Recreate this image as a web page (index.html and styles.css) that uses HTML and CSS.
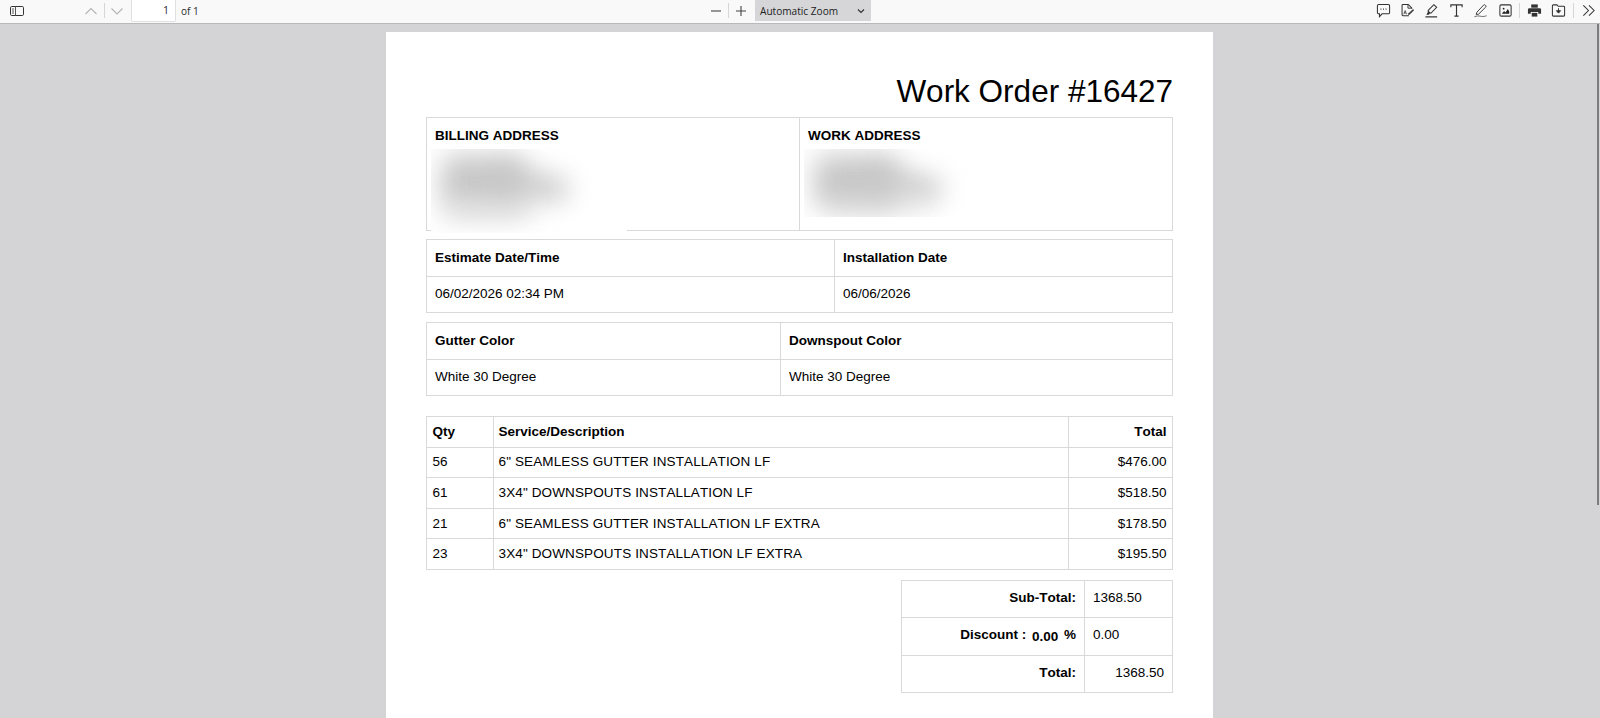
FILE: index.html
```html
<!DOCTYPE html>
<html lang="en">
<head>
<meta charset="utf-8">
<title>Work Order #16427</title>
<link rel="stylesheet" href="styles.css">
</head>
<body>
<header class="toolbar">
  <div class="tb-left">
    <button class="icon-btn sidebar-btn"><svg width="16" height="16" viewBox="0 0 16 16"><rect x="1.500" y="3.500" width="13" height="9" rx="1.200" fill="none" stroke="#333" stroke-width="1"/><path d="M6.500 3.500v9M3 6h2M3 8h2M3 10h2" stroke="#555" stroke-width="1" fill="none"/></svg></button>
    <button class="icon-btn nav-up"><svg width="14" height="14" viewBox="0 0 14 14"><path d="M1.500 10 7 4.500 12.500 10" fill="none" stroke="#b4b4b6" stroke-width="1.100"/></svg></button>
    <span class="sep"></span>
    <button class="icon-btn nav-down"><svg width="14" height="14" viewBox="0 0 14 14"><path d="M1.500 4.500 7 10l5.500-5.500" fill="none" stroke="#b4b4b6" stroke-width="1.100"/></svg></button>
    <div class="page-input">1</div>
    <span class="page-of">of 1</span>
  </div>
  <div class="tb-center">
    <button class="icon-btn zoom-btn"><svg width="12" height="12" viewBox="0 0 12 12"><path d="M1 6h10" stroke="#444" stroke-width="1.100"/></svg></button>
    <span class="sep"></span>
    <button class="icon-btn zoom-btn"><svg width="12" height="12" viewBox="0 0 12 12"><path d="M1 6h10M6 1v10" stroke="#444" stroke-width="1.100"/></svg></button>
    <div class="zoom-select"><span>Automatic Zoom</span><svg width="8" height="6" viewBox="0 0 8 6"><path d="M1 1.500 4 4.500 7 1.500" fill="none" stroke="#333" stroke-width="1.200"/></svg></div>
  </div>
  <div class="tb-right">
    <button class="tool"><svg viewBox="0 0 16 16"><path d="M2.800 1.500h10.400a1.300 1.300 0 0 1 1.300 1.300v7.400a1.300 1.300 0 0 1-1.300 1.300H6.500l-2.800 3v-3H2.800a1.300 1.300 0 0 1-1.300-1.300V2.800a1.300 1.300 0 0 1 1.300-1.300z" fill="none" stroke="#333" stroke-width="1.100"/><path d="M4.800 6.500h1M7.500 6.500h1M10.200 6.500h1" stroke="#333" stroke-width="1.200"/></svg></button>
    <button class="tool"><svg viewBox="0 0 16 16"><path d="M9.500 13.500H3.200a1 1 0 0 1-1-1V2.500a1 1 0 0 1 1-1h5.600l3.700 3.700v1" fill="none" stroke="#333" stroke-width="1.100"/><path d="M8.500 1.500v4h4" fill="none" stroke="#333" stroke-width="1"/><path d="M9 11l5-4.500 1 1.200-4.800 4.700-1.700.3z" fill="#444"/><path d="M4 12l1.500-4 1.500 4M4.600 10.600h1.800" fill="none" stroke="#333" stroke-width=".8"/></svg></button>
    <button class="tool"><svg viewBox="0 0 16 16"><path d="M1.500 14.800h12.500" stroke="#333" stroke-width="1.300"/><path d="M4.500 7.800 10.500 1.800l3 2.800-6 6.200-3 .3z" fill="none" stroke="#333" stroke-width="1.100"/><path d="M4.500 8l2.800 2.600-3 .4z" fill="#333"/><path d="M3.700 10.500l-1.200 2h2.700l.8-1z" fill="#333"/></svg></button>
    <button class="tool"><svg viewBox="0 0 16 16"><path d="M2 4.500V2h12v2.500M8 2v12M5.800 14h4.400" fill="none" stroke="#333" stroke-width="1.200"/></svg></button>
    <button class="tool"><svg viewBox="0 0 16 16"><path d="M4 10 11.300 2.200a1.200 1.200 0 0 1 1.700 0l.5.500a1.200 1.200 0 0 1 0 1.700L6 11.800l-2.500.6z" fill="none" stroke="#333" stroke-width="1"/><path d="M1.500 14.600c3-.8 4.500-1 6-.6 2 .5 4 .7 7-.4" fill="none" stroke="#555" stroke-width=".9"/></svg></button>
    <button class="tool"><svg viewBox="0 0 16 16"><rect x="2" y="2" width="12" height="12" rx="1.500" fill="none" stroke="#333" stroke-width="1.100"/><path d="M4 11.500l2.500-3 1.500 1.500L10.500 6.500 12 9v2.500z" fill="#222"/><circle cx="6" cy="6" r="1" fill="#222"/></svg></button>
    <span class="sep sep-right"></span>
    <button class="tool"><svg viewBox="0 0 16 16"><path d="M4.500 1.500h7v3.500h-7z" fill="#333"/><path d="M2.500 5.500h11a1.500 1.500 0 0 1 1.500 1.500v4.500h-3V9.500H4v2H1V7a1.500 1.500 0 0 1 1.500-1.500z" fill="#333"/><path d="M5 10.500h6v4H5z" fill="#333"/></svg></button>
    <button class="tool"><svg viewBox="0 0 16 16"><path d="M2.500 2h3.800l1.400 1.500h5.800a1 1 0 0 1 1 1v8.500a1 1 0 0 1-1 1h-11a1 1 0 0 1-1-1V3a1 1 0 0 1 1-1z" fill="none" stroke="#333" stroke-width="1.100"/><path d="M8 5.500v5M5.800 8.200 8 10.800l2.200-2.600z" fill="#333" stroke="#333" stroke-width="1"/></svg></button>
    <span class="sep sep-right"></span>
    <button class="tool"><svg viewBox="0 0 16 16"><path d="M2.500 2.500 8 8l-5.500 5.500M8.500 2.500 14 8l-5.500 5.500" fill="none" stroke="#333" stroke-width="1.100"/></svg></button>
  </div>
</header>
<main class="viewer">
  <article class="sheet">
    <h1 class="doc-title">Work Order #16427</h1>

    <table class="grid address-table">
      <colgroup><col class="c-addr"><col></colgroup>
      <tr>
        <td class="addr-cell"><strong>BILLING ADDRESS</strong>
          <div class="redact redact-billing"><i class="smear s1"></i><i class="smear s2"></i><i class="smear s3"></i></div>
        </td>
        <td class="addr-cell"><strong>WORK ADDRESS</strong>
          <div class="redact redact-work"><i class="smear s1"></i><i class="smear s2"></i><i class="smear s4"></i></div>
        </td>
      </tr>
    </table>

    <table class="grid info-table">
      <colgroup><col class="c-date"><col></colgroup>
      <tr><th>Estimate Date/Time</th><th>Installation Date</th></tr>
      <tr><td>06/02/2026 02:34 PM</td><td>06/06/2026</td></tr>
    </table>

    <table class="grid info-table">
      <colgroup><col class="c-color"><col></colgroup>
      <tr><th>Gutter Color</th><th>Downspout Color</th></tr>
      <tr><td>White 30 Degree</td><td>White 30 Degree</td></tr>
    </table>

    <table class="grid items-table">
      <colgroup><col class="c-qty"><col><col class="c-total"></colgroup>
      <tr><th>Qty</th><th>Service/Description</th><th class="num">Total</th></tr>
      <tr><td>56</td><td class="desc">6" SEAMLESS GUTTER INSTALLATION LF</td><td class="num">$476.00</td></tr>
      <tr><td>61</td><td class="desc">3X4" DOWNSPOUTS INSTALLATION LF</td><td class="num">$518.50</td></tr>
      <tr><td>21</td><td class="desc">6" SEAMLESS GUTTER INSTALLATION LF EXTRA</td><td class="num">$178.50</td></tr>
      <tr><td>23</td><td class="desc">3X4" DOWNSPOUTS INSTALLATION LF EXTRA</td><td class="num">$195.50</td></tr>
    </table>

    <table class="grid totals-table">
      <colgroup><col class="c-label"><col></colgroup>
      <tr class="r-sub"><th>Sub-Total:</th><td>1368.50</td></tr>
      <tr class="r-disc"><th>Discount : <span class="disc-val">0.00</span> %</th><td>0.00</td></tr>
      <tr class="r-sub"><th>Total:</th><td class="grand">1368.50</td></tr>
    </table>
  </article>
  <div class="scroll-thumb"></div>
</main>
</body>
</html>
```

FILE: styles.css
```css
* { box-sizing: border-box; }
html, body { margin: 0; height: 100%; overflow: hidden; }
body {
  display: flex;
  flex-direction: column;
  font-family: "Liberation Sans", Arial, sans-serif;
  font-kerning: none;
  background: #d4d4d7;
  color: #000;
}
button { border: 0; background: none; padding: 0; display: flex; align-items: center; justify-content: center; }

.toolbar {
  flex: 0 0 24px;
  height: 24px;
  display: flex;
  align-items: flex-start;
  background: #f9f9fa;
  border-bottom: 1px solid #b9b9bb;
  font-family: "Open Sans", "Noto Sans", sans-serif;
  font-kerning: auto;
  font-size: 10.100px;
  color: #2a2a2e;
}
.tb-left, .tb-center, .tb-right { display: flex; align-items: center; height: 21px; flex: none; }
.tb-left { width: 693px; }
.tb-center { width: 178px; }
.tb-right { width: 729px; padding-left: 500px; }
.icon-btn { height: 21px; }
.sidebar-btn { width: 16px; margin: 0 0 0 9px; }
.nav-up { width: 14px; margin-left: 59px; }
.nav-down { width: 14px; margin-left: 5px; }
.sep { display: block; width: 1px; height: 15px; background: #d6d6d8; margin-left: 6px; }
.page-input {
  width: 45px;
  height: 22px;
  margin-left: 7px;
  background: #fff;
  border: 1px solid #e0e0e2;
  border-top: 0;
  border-radius: 0 0 2px 2px;
  text-align: right;
  padding: 3px 6px 0 0;
  font-size: 10.500px;
}
.page-of { margin-left: 5px; }

.zoom-btn { width: 12px; margin-left: 5px; }
.tb-center .sep { margin-left: 6px; margin-right: 1px; }
.tb-center .zoom-btn:first-child { margin-left: 17px; }
.zoom-select {
  width: 116px;
  height: 21px;
  margin-left: 8px;
  padding: 0 6px 0 5px;
  display: flex;
  flex: none;
  align-items: center;
  justify-content: space-between;
  background: #d6d6d9;
  color: #222;
}
.tool { width: 24.400px; height: 21px; flex: none; }
.tool svg { width: 15px; height: 15px; }
.sep-right { margin-left: 2px; margin-right: 2px; flex: none; }

.viewer {
  flex: 1;
  min-height: 0;
  overflow: hidden;
  position: relative;
  padding: 8px 1px 0 0;
}
.sheet {
  width: 827px;
  margin: 0 auto;
  background: #fff;
  padding: 0 40px 40px 39.500px;
  min-height: 800px;
}
.scroll-thumb {
  position: absolute;
  top: 0;
  right: 1px;
  width: 2px;
  height: 481px;
  background: #7c7c7e;
}

.doc-title {
  margin: 0;
  height: 85px;
  padding: 41px 0 0;
  font-size: 31.500px;
  line-height: 36px;
  font-weight: 400;
  text-align: right;
}

.grid {
  width: 747.500px;
  table-layout: fixed;
  border-collapse: collapse;
  font-size: 13.500px;
  line-height: 16px;
}
.grid th, .grid td { border: 1px solid #d9d9d9; padding: 0 8.500px; text-align: left; }
.grid th { font-weight: 700; }

.address-table { margin-bottom: 8px; }
.c-addr { width: 373px; }
.address-table .addr-cell { height: 113px; vertical-align: top; padding-top: 10px; position: relative; }
.redact { position: absolute; background: #fff; overflow: hidden; }
.redact-billing { left: 4px; top: 31px; width: 196px; height: 84px; }
.redact-work { left: 4px; top: 31px; width: 189px; height: 68px; }
.smear { position: absolute; display: block; background: #c8c8c8; filter: blur(13px); border-radius: 14px; }
.s1 { left: 10px; top: 6px; width: 86px; height: 54px; }
.s2 { left: 58px; top: 24px; width: 80px; height: 24px; transform: rotate(8deg); }
.s3 { left: 12px; top: 54px; width: 90px; height: 14px; background: #dcdcdc; }
.s4 { left: 26px; top: 50px; width: 96px; height: 8px; background: #dcdcdc; }

.info-table { margin-bottom: 9px; }
.info-table th, .info-table td { height: 36.500px; }
.c-date { width: 408px; }
.c-color { width: 354px; }

.items-table { margin-top: 20px; margin-bottom: 10px; }
.items-table th, .items-table td { height: 30.600px; padding: 0 5.500px 0 5px; }
.items-table th:first-child, .items-table td:first-child { padding-left: 6px; }
.items-table .desc { letter-spacing: 0.130px; }
.c-qty { width: 67px; }
.c-total { width: 104px; }
.grid .num { text-align: right; }

.totals-table { width: 272px; margin-left: auto; }
.c-label { width: 182.500px; }
.totals-table th { text-align: right; padding-right: 7.500px; }
.r-sub th, .r-sub td { height: 36.700px; padding-bottom: 2px; }
.r-disc th, .r-disc td { height: 38.700px; padding-bottom: 3px; }
.disc-val { position: relative; top: 2px; margin: 0 2px; }
.grid .grand { text-align: right; padding-right: 8px; }
```
